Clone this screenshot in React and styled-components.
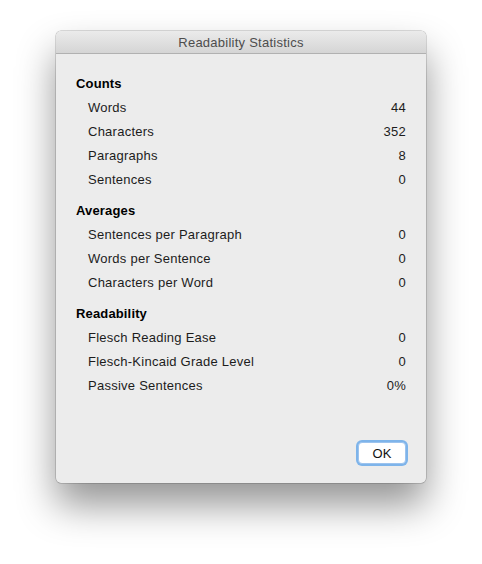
import styled, { createGlobalStyle } from "styled-components";

const GlobalStyle = createGlobalStyle`
    * {
    box-sizing: border-box;
    }
    body {
    margin: 0;
    background: #ffffff;
    font-family: "Liberation Sans", Arial, sans-serif;
    }
`;

const groups = [
    {
        title: "Counts",
        rows: [
            ["Words", "44"],
            ["Characters", "352"],
            ["Paragraphs", "8"],
            ["Sentences", "0"],
        ],
    },
    {
        title: "Averages",
        rows: [
            ["Sentences per Paragraph", "0"],
            ["Words per Sentence", "0"],
            ["Characters per Word", "0"],
        ],
    },
    {
        title: "Readability",
        rows: [
            ["Flesch Reading Ease", "0"],
            ["Flesch-Kincaid Grade Level", "0"],
            ["Passive Sentences", "0%"],
        ],
    },
];

export default function App() {
    return (
        <Page>
            <GlobalStyle />
            <Window>
                <TitleBar>Readability Statistics</TitleBar>
                <Content>
                    {groups.map(group => (
                        <Group key={group.title}>
                            <GroupTitle>{group.title}</GroupTitle>
                            {group.rows.map(([label, value]) => (
                                <Row key={label}>
                                    <span>{label}</span>
                                    <span>{value}</span>
                                </Row>
                            ))}
                        </Group>
                    ))}
                </Content>
                <Footer>
                    <OkButton>OK</OkButton>
                </Footer>
            </Window>
        </Page>
    );
}

const Page = styled.div`
    width: 482px;
    height: 564px;
    display: flex;
    justify-content: center;
    align-items: flex-start;
    padding-top: 31px;
    overflow: hidden;
`;

const Window = styled.div`
    width: 370px;
    height: 452px;
    background-color: #ececec;
    border-radius: 5px;
    display: flex;
    flex-direction: column;
    overflow: hidden;
    box-shadow: 0 0 0 0.5px rgba(0, 0, 0, 0.28), 0 22px 38px rgba(0, 0, 0, 0.42);
`;

const TitleBar = styled.div`
    height: 23px;
    flex-shrink: 0;
    background: linear-gradient(#ebebeb, #d5d5d5);
    border-bottom: 1px solid #b1b1b1;
    color: #4d4d4d;
    font-size: 13px;
    letter-spacing: 0.25px;
    display: flex;
    align-items: center;
    justify-content: center;
`;

const Content = styled.div`
    flex: 1;
    padding: 18px 20px 0 20px;
    display: flex;
    flex-direction: column;
    gap: 7px;
`;

const Group = styled.div`
    display: flex;
    flex-direction: column;
`;

const GroupTitle = styled.div`
    height: 24px;
    line-height: 24px;
    font-size: 13px;
    font-weight: bold;
    letter-spacing: 0.15px;
    color: #000000;
`;

const Row = styled.div`
    height: 24px;
    line-height: 24px;
    font-size: 13px;
    letter-spacing: 0.25px;
    color: #1c1c1c;
    padding-left: 12px;
    display: flex;
    justify-content: space-between;
`;

const Footer = styled.div`
    display: flex;
    justify-content: flex-end;
    padding: 0 20px 19px 0;
`;

const OkButton = styled.button`
    width: 48px;
    height: 22px;
    background-color: #ffffff;
    border: 1px solid #9cc3ee;
    border-radius: 4px;
    box-shadow: 0 0 0 2px #7eb4ea;
    font-family: "Liberation Sans", Arial, sans-serif;
    font-size: 13px;
    color: #111111;
    padding: 0;
`;
